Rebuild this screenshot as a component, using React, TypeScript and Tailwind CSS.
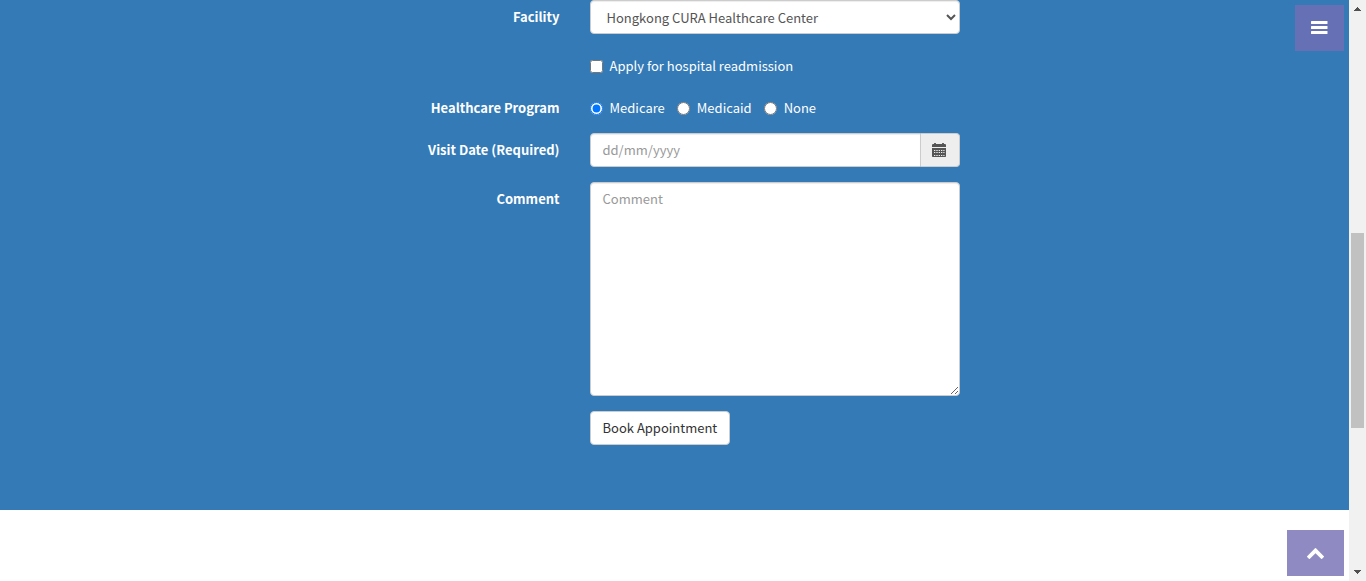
import React from "react";

const control =
  "w-full rounded border border-[#cccccc] bg-white px-3 text-[13px] text-[#555555] shadow-[inset_0_1px_1px_rgba(0,0,0,0.075)] placeholder:text-[#999999]";

function Row({
  label,
  htmlFor,
  children,
}: {
  label?: string;
  htmlFor?: string;
  children: React.ReactNode;
}) {
  return (
    <div className="grid grid-cols-12">
      <div className="col-span-5 px-[15px] pt-[7px] text-right font-bold">
        {label && <label htmlFor={htmlFor}>{label}</label>}
      </div>
      <div className="col-span-4 px-[15px]">{children}</div>
    </div>
  );
}

function BarsIcon() {
  return (
    <svg className="h-[20px] w-[17px]" viewBox="0 0 17 20" fill="currentColor" aria-hidden="true">
      <rect x="0" y="3" width="16.5" height="3" rx="0.5" />
      <rect x="0" y="8" width="16.5" height="3" rx="0.5" />
      <rect x="0" y="13" width="16.5" height="3" rx="0.5" />
    </svg>
  );
}

function ChevronUpIcon() {
  return (
    <svg className="h-[21px] w-[19px]" viewBox="0 0 1792 1981" fill="currentColor" aria-hidden="true">
      <path d="M1683 1331l-166 165q-19 19-45 19t-45-19l-531-531-531 531q-19 19-45 19t-45-19l-166-165q-19-19-19-45.5t19-45.5l742-741q19-19 45-19t45 19l742 741q19 19 19 45.5t-19 45.5z" />
    </svg>
  );
}

function CalendarIcon() {
  return (
    <svg className="h-[14px] w-[14px]" viewBox="0 0 14 14" fill="#555555" aria-hidden="true">
      <path d="M0 4V2.2Q0 1 1 1H2V.5Q2 0 2.5 0H3.5Q4 0 4 .5V1H10V.5Q10 0 10.5 0H11.5Q12 0 12 .5V1H13Q14 1 14 2.2V4Z" />
      <path
        fillRule="evenodd"
        d="M0 5H14V13.3Q14 14 13.3 14H.7Q0 14 0 13.3ZM2 7V8H3.3V7ZM4.3 7V8H5.7V7ZM6.7 7V8H8V7ZM9 7V8H10.3V7ZM11.3 7V8H12.5V7ZM2 9V10H3.3V9ZM4.3 9V10H5.7V9ZM6.7 9V10H8V9ZM9 9V10H10.3V9ZM11.3 9V10H12.5V9ZM2 12V13H3.3V12ZM4.3 12V13H5.7V12ZM6.7 12V13H8V12ZM9 12V13H10.3V12ZM11.3 12V13H12.5V12Z"
      />
    </svg>
  );
}

function ScrollRail() {
  return (
    <div className="sticky top-0 flex h-screen w-[17px] shrink-0 flex-col items-center bg-[#f1f1f1]" aria-hidden="true">
      <svg className="h-[17px] w-[17px] shrink-0" viewBox="0 0 17 17" fill="#505050" shapeRendering="crispEdges">
        <path d="M5 11V10H6V9H7V8H8V7H9V8H10V9H11V10H12V11Z" />
      </svg>
      <div className="grow-[216]" />
      <div className="w-[13px] grow-[195] bg-[#c1c1c1]" />
      <div className="grow-[136]" />
      <svg className="h-[17px] w-[17px] shrink-0" viewBox="0 0 17 17" fill="#505050" shapeRendering="crispEdges">
        <path d="M5 6V7H6V8H7V9H8V10H9V9H10V8H11V7H12V6Z" />
      </svg>
    </div>
  );
}

export default function App() {
  return (
    <div className="flex min-h-screen bg-white font-['Noto_Sans_CJK_SC','Noto_Sans',sans-serif] text-[13px] leading-5">
      <main className="min-w-0 flex-1">
        <section className="bg-[#337ab7] pb-[65px] text-white">
          <form
            className="mx-auto flex max-w-[1200px] flex-col gap-[15px]"
            onSubmit={(e) => e.preventDefault()}
          >
            <Row label="Facility" htmlFor="facility">
              <select id="facility" className={`${control} block h-[34px]`} defaultValue="hongkong">
                <option value="tokyo">Tokyo CURA Healthcare Center</option>
                <option value="hongkong">Hongkong CURA Healthcare Center</option>
                <option value="seoul">Seoul CURA Healthcare Center</option>
              </select>
            </Row>

            <Row>
              <label className="flex items-center gap-[7px] pt-[7px]">
                <input type="checkbox" className="h-[13px] w-[13px]" />
                Apply for hospital readmission
              </label>
            </Row>

            <Row label="Healthcare Program">
              <div className="flex gap-3 pt-[7px]" role="radiogroup" aria-label="Healthcare Program">
                {["Medicare", "Medicaid", "None"].map((program) => (
                  <label key={program} className="flex items-center gap-[7px]">
                    <input
                      type="radio"
                      name="program"
                      value={program}
                      defaultChecked={program === "Medicare"}
                      className="h-[13px] w-[13px]"
                    />
                    {program}
                  </label>
                ))}
              </div>
            </Row>

            <Row label="Visit Date (Required)" htmlFor="visit-date">
              <div className="flex h-[34px]">
                <input
                  id="visit-date"
                  type="text"
                  placeholder="dd/mm/yyyy"
                  className={`${control} min-w-0 flex-1 rounded-r-none py-[6px]`}
                />
                <button
                  type="button"
                  aria-label="Pick a date"
                  className="flex w-[39px] items-center rounded-r border border-l-0 border-[#cccccc] bg-[#eeeeee] pl-[11px]"
                >
                  <CalendarIcon />
                </button>
              </div>
            </Row>

            <Row label="Comment" htmlFor="comment">
              <textarea
                id="comment"
                rows={10}
                placeholder="Comment"
                className={`${control} block resize-y py-[6px] leading-5`}
              />
            </Row>

            <Row>
              <button
                type="submit"
                className="block rounded border border-[#cccccc] bg-white px-3 py-[6px] text-[#333333]"
              >
                Book Appointment
              </button>
            </Row>
          </form>
        </section>
      </main>

      <ScrollRail />

      <button
        type="button"
        aria-label="Open menu"
        className="fixed top-[5px] right-[22px] flex h-[46px] w-[49px] items-center justify-center bg-[#736eb3]/80 text-white"
      >
        <BarsIcon />
      </button>
      <a
        href="#top"
        aria-label="Back to top"
        className="fixed right-[22px] bottom-[5px] flex h-[46px] w-[57px] items-center justify-center bg-[#736eb3]/80 text-white"
      >
        <ChevronUpIcon />
      </a>
    </div>
  );
}
